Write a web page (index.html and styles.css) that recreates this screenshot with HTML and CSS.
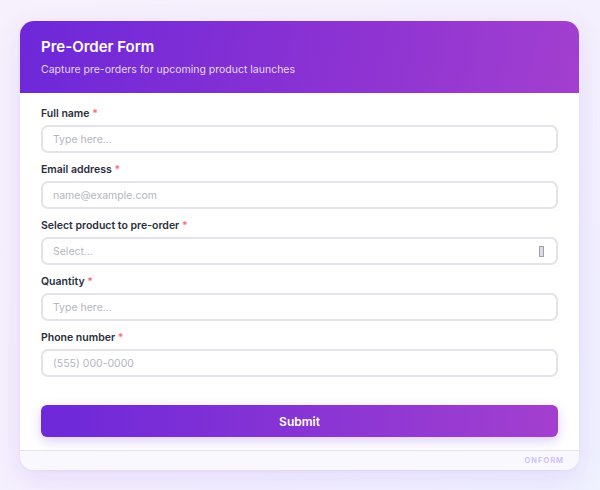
FILE: index.html
```html
<!DOCTYPE html>
<html>
<head>
<meta charset="utf-8">
<link rel="stylesheet" href="styles.css">
</head>
<body>
<div class="card">
  <div class="header">
    <h1 class="title">Pre-Order Form</h1>
    <p class="subtitle">Capture pre-orders for upcoming product launches</p>
  </div>
  <form class="body">
    <div class="field">
      <label class="label">Full name <span class="req">*</span></label>
      <div class="input"><span class="ph">Type here...</span></div>
    </div>
    <div class="field">
      <label class="label">Email address <span class="req">*</span></label>
      <div class="input"><span class="ph">name@example.com</span></div>
    </div>
    <div class="field">
      <label class="label">Select product to pre-order <span class="req">*</span></label>
      <div class="input select"><span class="ph">Select...</span><span class="tofu"></span></div>
    </div>
    <div class="field">
      <label class="label">Quantity <span class="req">*</span></label>
      <div class="input"><span class="ph">Type here...</span></div>
    </div>
    <div class="field">
      <label class="label">Phone number <span class="req">*</span></label>
      <div class="input"><span class="ph">(555) 000-0000</span></div>
    </div>
    <div class="actions">
      <button type="button" class="submit">Submit</button>
    </div>
  </form>
  <div class="footer"><span class="brand">ONFORM</span></div>
</div>
</body>
</html>
```

FILE: styles.css
```css
html, body {
  margin: 0;
  padding: 0;
}
body {
  width: 600px;
  height: 490px;
  box-sizing: border-box;
  padding: 21px 21px 0 20px;
  font-family: Inter, "Noto Sans", sans-serif;
  background: linear-gradient(135deg, #f6f1fc 0%, #f5f0fd 50%, #eff1fe 100%);
  overflow: hidden;
}
.card {
  width: 559px;
  background: #fff;
  border-radius: 14px;
  overflow: hidden;
  box-shadow: 0 8px 28px rgba(124, 58, 237, 0.12), 0 1px 3px rgba(124, 58, 237, 0.06);
}
.header {
  height: 72px;
  box-sizing: border-box;
  padding: 16px 21px 0;
  background: linear-gradient(100deg, #6d28d9 0%, #8b32d3 55%, #a23fcf 100%);
  color: #fff;
}
.title {
  margin: 0;
  font-size: 15px;
  font-weight: 600;
  line-height: 20px;
}
.subtitle {
  margin: 6px 0 0;
  font-size: 10.5px;
  line-height: 14px;
  color: rgba(255, 255, 255, 0.82);
}
.body {
  margin: 0;
  padding: 13px 21px 13px;
  display: flex;
  flex-direction: column;
}
.field {
  display: flex;
  flex-direction: column;
  gap: 3px;
  margin-bottom: 9px;
}
.label {
  font-size: 10.5px;
  font-weight: 600;
  line-height: 16px;
  color: #2a2f3c;
}
.req {
  color: #f87171;
}
.input {
  height: 28px;
  box-sizing: border-box;
  border: 2px solid #e3e3e9;
  border-radius: 7px;
  padding: 0 10px;
  display: flex;
  align-items: center;
  font-size: 10.5px;
}
.ph {
  color: #b3b6bf;
}
.select {
  justify-content: space-between;
}
.tofu {
  width: 3px;
  height: 9px;
  border: 1px solid #a0a0aa;
  background: #dcdce2;
  margin-right: 2px;
}
.actions {
  padding-top: 19px;
}
.submit {
  width: 100%;
  height: 32px;
  border: none;
  border-radius: 6px;
  background: linear-gradient(90deg, #6d28d9 0%, #8a35d4 55%, #a33fcf 100%);
  color: #fff;
  font-family: Inter, "Noto Sans", sans-serif;
  font-size: 12px;
  font-weight: 600;
  box-shadow: 0 4px 12px rgba(124, 58, 237, 0.25);
}
.footer {
  height: 19px;
  border-top: 1px solid #e7e3ee;
  background: #f9f8ff;
  display: flex;
  align-items: center;
  justify-content: flex-end;
  padding-right: 15px;
}
.brand {
  font-size: 7.5px;
  font-weight: 600;
  letter-spacing: 1px;
  color: #c9bdf9;
}
```
